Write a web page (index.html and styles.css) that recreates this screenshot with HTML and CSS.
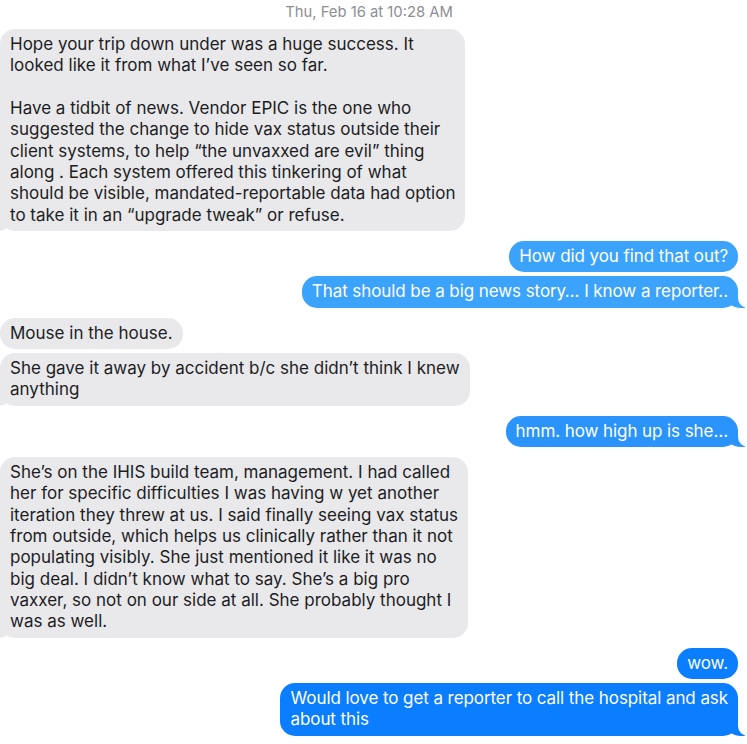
FILE: index.html
```html
<!DOCTYPE html>
<html>
<head>
<meta charset="utf-8">
<link rel="stylesheet" href="styles.css">
</head>
<body>
<div class="chat">
  <div class="stamp">Thu, Feb 16 at 10:28 AM</div>

  <div class="group in first">
    <div class="bubble gray tail">Hope your trip down under was a huge success. It<br>looked like it from what I’ve seen so far.<br><br>Have a tidbit of news. Vendor EPIC is the one who<br>suggested the change to hide vax status outside their<br>client systems, to help “the unvaxxed are evil” thing<br>along . Each system offered this tinkering of what<br>should be visible, mandated-reportable data had option<br>to take it in an “upgrade tweak” or refuse.</div>
  </div>

  <div class="group out">
    <div class="bubble blue1">How did you find that out?</div>
    <div class="bubble blue1 tail">That should be a big news story… I know a reporter..</div>
  </div>

  <div class="group in">
    <div class="bubble gray">Mouse in the house.</div>
    <div class="bubble gray tail">She gave it away by accident b/c she didn’t think I knew<br>anything</div>
  </div>

  <div class="group out">
    <div class="bubble blue2 tail">hmm. how high up is she…</div>
  </div>

  <div class="group in">
    <div class="bubble gray tail">She’s on the IHIS build team, management. I had called<br>her for specific difficulties I was having w yet another<br>iteration they threw at us. I said finally seeing vax status<br>from outside, which helps us clinically rather than it not<br>populating visibly. She just mentioned it like it was no<br>big deal. I didn’t know what to say. She’s a big pro<br>vaxxer, so not on our side at all. She probably thought I<br>was as well.</div>
  </div>

  <div class="group out">
    <div class="bubble blue3">wow.</div>
    <div class="bubble blue3 tail">Would love to get a reporter to call the hospital and ask<br>about this</div>
  </div>
</div>
</body>
</html>
```

FILE: styles.css
```css
html, body {
  margin: 0;
  padding: 0;
  background: #ffffff;
}

body {
  font-family: Inter, "Liberation Sans", Arial, sans-serif;
  overflow: hidden;
}

.chat {
  display: flex;
  flex-direction: column;
  padding: 4px 9px 0 0;
}

.stamp {
  text-align: center;
  font-size: 14.8px;
  line-height: 16px;
  color: #8e8e93;
  margin-bottom: 9px;
}

.group {
  display: flex;
  flex-direction: column;
  gap: 4px;
  margin-top: 10px;
}

.group.first {
  margin-top: 0;
}

.group.in {
  align-items: flex-start;
}

.group.out {
  align-items: flex-end;
}

.bubble {
  position: relative;
  z-index: 0;
  font-size: 17px;
  line-height: 21.33px;
  padding: 5px 10px;
  border-radius: 15px;
  white-space: nowrap;
}

.out .bubble {
  letter-spacing: -0.08px;
}

.gray {
  background: #e9e9eb;
  color: #1d1d1f;
}

.blue1 {
  background: #3ba3fb;
  color: #ffffff;
}

.blue2 {
  background: #2b94fc;
  color: #ffffff;
}

.blue3 {
  background: #0b7dff;
  color: #ffffff;
}

.out .tail::before {
  content: "";
  position: absolute;
  right: -7px;
  bottom: 0;
  width: 20px;
  height: 18px;
  background: inherit;
  border-bottom-left-radius: 16px 14px;
  z-index: -1;
}

.out .tail::after {
  content: "";
  position: absolute;
  right: -26px;
  bottom: 0;
  width: 26px;
  height: 18px;
  background: #ffffff;
  border-bottom-left-radius: 10px;
  z-index: -1;
}

.in .tail::before {
  content: "";
  position: absolute;
  left: -7px;
  bottom: 0;
  width: 20px;
  height: 18px;
  background: #e9e9eb;
  border-bottom-right-radius: 16px 14px;
  z-index: -1;
}

.in .tail::after {
  content: "";
  position: absolute;
  left: -26px;
  bottom: 0;
  width: 26px;
  height: 18px;
  background: #ffffff;
  border-bottom-right-radius: 10px;
  z-index: -1;
}
```
